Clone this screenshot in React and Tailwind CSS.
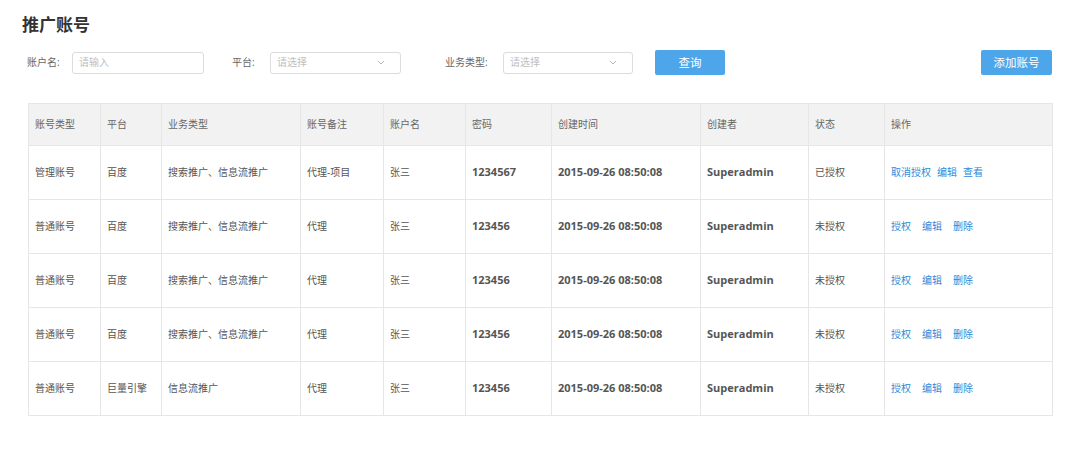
import React from 'react';

const cols = [72, 61, 139, 83, 82, 86, 149, 108, 76, 168];
const headers = ['账号类型', '平台', '业务类型', '账号备注', '账户名', '密码', '创建时间', '创建者', '状态', '操作'];

const rows = [
  { type: '管理账号', platform: '百度', biz: '搜索推广、信息流推广', note: '代理-项目', name: '张三', pwd: '1234567', status: '已授权', actions: ['取消授权', '编辑', '查看'], tight: true },
  { type: '普通账号', platform: '百度', biz: '搜索推广、信息流推广', note: '代理', name: '张三', pwd: '123456', status: '未授权', actions: ['授权', '编辑', '删除'] },
  { type: '普通账号', platform: '百度', biz: '搜索推广、信息流推广', note: '代理', name: '张三', pwd: '123456', status: '未授权', actions: ['授权', '编辑', '删除'] },
  { type: '普通账号', platform: '百度', biz: '搜索推广、信息流推广', note: '代理', name: '张三', pwd: '123456', status: '未授权', actions: ['授权', '编辑', '删除'] },
  { type: '普通账号', platform: '巨量引擎', biz: '信息流推广', note: '代理', name: '张三', pwd: '123456', status: '未授权', actions: ['授权', '编辑', '删除'] },
];

function Chevron() {
  return (
    <svg width="8" height="5" viewBox="0 0 8 5" fill="none" className="shrink-0">
      <path d="M1 1l3 3 3-3" stroke="#b5b5b5" strokeWidth="1" />
    </svg>
  );
}

function Select({ width }) {
  return (
    <div className={`${width} h-[22px] border border-[#dcdcdc] rounded-[3px] bg-white flex items-center justify-between pl-[6px] pr-[15px]`}>
      <span className="text-[10px] text-[#c0c0c0]">请选择</span>
      <Chevron />
    </div>
  );
}

export default function App() {
  return (
    <main
      className="min-h-screen w-[1080px] h-[461px] bg-white overflow-hidden"
      style={{ fontFamily: '"Open Sans", "Noto Sans CJK SC", sans-serif' }}
    >
      <div className="ml-[28px] w-[1024px] pt-[12px]">
        <h1 className="-ml-[6px] text-[17px] leading-[26px] font-bold text-[#333]">推广账号</h1>

        <div className="mt-[12px] h-[25px] flex items-center">
          <span className="text-[10px] text-[#666] w-[45px] -ml-[1px]">账户名:</span>
          <div className="w-[132px] h-[22px] border border-[#dcdcdc] rounded-[3px] flex items-center pl-[6px]">
            <span className="text-[10px] text-[#c0c0c0]">请输入</span>
          </div>
          <span className="text-[10px] text-[#666] ml-[28px] w-[38px]">平台:</span>
          <Select width="w-[131px]" />
          <span className="text-[10px] text-[#666] ml-[44px] w-[58px]">业务类型:</span>
          <Select width="w-[130px]" />
          <button className="ml-[22px] w-[70px] h-[25px] rounded-[2px] bg-[#4ea6ea] text-white text-[11.5px]">查询</button>
          <button className="ml-auto w-[71px] h-[25px] rounded-[2px] bg-[#4ea6ea] text-white text-[11.5px]">添加账号</button>
        </div>

        <table className="mt-[28px] table-fixed border-collapse w-[1024px] text-[10px]">
          <colgroup>
            {cols.map((w, i) => (
              <col key={i} style={{ width: w }} />
            ))}
          </colgroup>
          <thead>
            <tr className="h-[42px] bg-[#f2f2f2]">
              {headers.map((h) => (
                <th key={h} className="border border-[#e6e6e6] px-[6px] text-left font-normal text-[#666]">
                  {h}
                </th>
              ))}
            </tr>
          </thead>
          <tbody>
            {rows.map((r, i) => (
              <tr key={i} className="h-[54px] text-[#555]">
                <td className="border border-[#e6e6e6] px-[6px]">{r.type}</td>
                <td className="border border-[#e6e6e6] px-[6px]">{r.platform}</td>
                <td className="border border-[#e6e6e6] px-[6px]">{r.biz}</td>
                <td className="border border-[#e6e6e6] px-[6px]">{r.note}</td>
                <td className="border border-[#e6e6e6] px-[6px]">{r.name}</td>
                <td className="border border-[#e6e6e6] px-[6px] font-bold text-[11px]">{r.pwd}</td>
                <td className="border border-[#e6e6e6] px-[6px] font-bold text-[11px]">2015-09-26 08:50:08</td>
                <td className="border border-[#e6e6e6] px-[6px] font-bold text-[11px]">Superadmin</td>
                <td className="border border-[#e6e6e6] px-[6px]">{r.status}</td>
                <td className="border border-[#e6e6e6] px-[6px]">
                  <div className={`flex ${r.tight ? 'gap-[6px]' : 'gap-[11px]'}`}>
                    {r.actions.map((a) => (
                      <a key={a} className="text-[#2e8ad8] cursor-pointer">{a}</a>
                    ))}
                  </div>
                </td>
              </tr>
            ))}
          </tbody>
        </table>
      </div>
    </main>
  );
}
